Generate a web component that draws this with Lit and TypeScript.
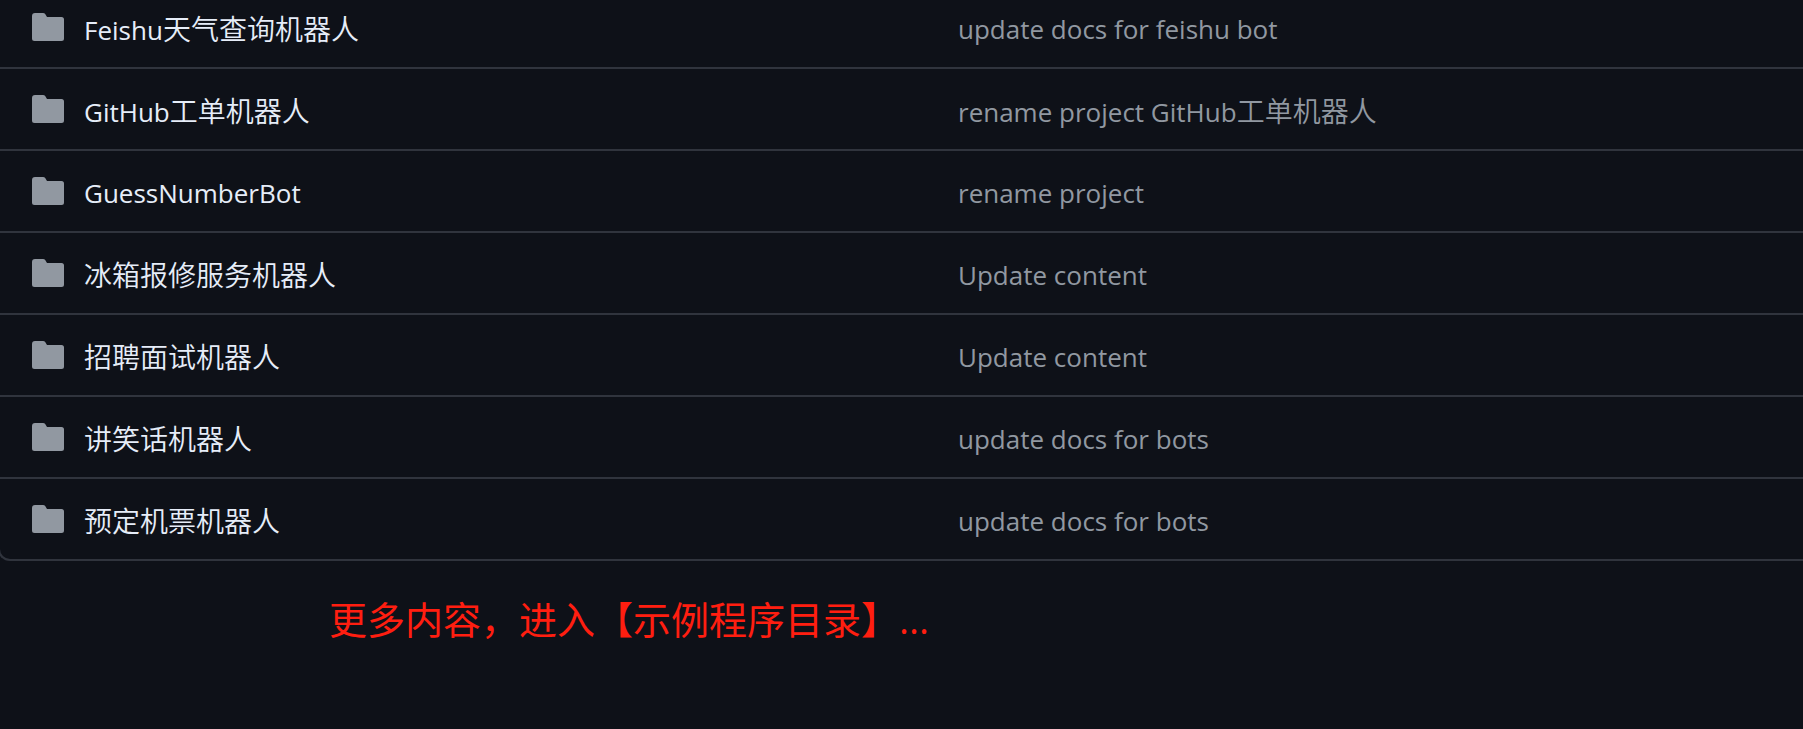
import { LitElement, html, css } from "lit";
import { customElement } from "lit/decorators.js";

const entries = [
  { name: "Feishu天气查询机器人", message: "update docs for feishu bot" },
  { name: "GitHub工单机器人", message: "rename project GitHub工单机器人" },
  { name: "GuessNumberBot", message: "rename project" },
  { name: "冰箱报修服务机器人", message: "Update content" },
  { name: "招聘面试机器人", message: "Update content" },
  { name: "讲笑话机器人", message: "update docs for bots" },
  { name: "预定机票机器人", message: "update docs for bots" },
];

// Chinese runs are set one step larger than the Latin text beside them.
const mixed = (text: string) =>
  text
    .split(/([\u4e00-\u9fff]+)/)
    .filter((run) => run !== "")
    .map((run) =>
      /[\u4e00-\u9fff]/.test(run)
        ? html`<span class="han" lang="zh-CN">${run}</span>`
        : run
    );

@customElement("app-root")
export class AppRoot extends LitElement {
  static styles = css`
    :host {
      display: block;
      box-sizing: border-box;
      min-height: 100vh;
      overflow: hidden;
      background: #0e1118;
      color: #e6edf8;
      font-family: "Open Sans", "Noto Sans CJK SC", sans-serif;
      font-size: 26px;
      line-height: 40px;
    }
    .files {
      list-style: none;
      margin: -13px 0 0 -2px;
      padding: 0;
      border: 2px solid #30343d;
      border-width: 0 0 2px 2px;
      border-radius: 0 0 0 12px;
    }
    .row {
      display: grid;
      grid-template-columns: 32px minmax(0, 854fr) minmax(0, 845fr);
      column-gap: 20px;
      align-items: center;
      height: 80px;
      padding-left: 32px;
    }
    .row + .row {
      border-top: 2px solid #30343d;
    }
    .icon {
      display: block;
      width: 32px;
      height: 28px;
      fill: #9198a1;
    }
    .name,
    .message {
      color: inherit;
      text-decoration: none;
      font-weight: 400;
      white-space: nowrap;
      padding-top: 4px;
    }
    .message {
      color: #9198a1;
    }
    .han {
      font-size: 28px;
      font-weight: 350;
    }
    .note {
      margin: 30px 0 0 329px;
      color: #ff1e10;
      font-size: 38px;
      line-height: 56px;
    }
  `;

  render() {
    return html`
      <ul class="files">
        ${entries.map(
          (e) => html`
            <li class="row">
              <svg class="icon" viewBox="0 0 32 28" aria-hidden="true">
                <path
                  d="M3 0H11C12 0 12.700 .4 13.200 1L15 4H29.500A2.500 2.500 0 0 1 32 6.500V25.500A2.500 2.500 0 0 1 29.500 28H2.500A2.500 2.500 0 0 1 0 25.500V3A3 3 0 0 1 3 0Z"
                />
              </svg>
              <a class="name" href="#">${mixed(e.name)}</a>
              <a class="message" href="#">${mixed(e.message)}</a>
            </li>
          `
        )}
      </ul>
      <p class="note">更多内容，进入【示例程序目录】...</p>
    `;
  }
}
